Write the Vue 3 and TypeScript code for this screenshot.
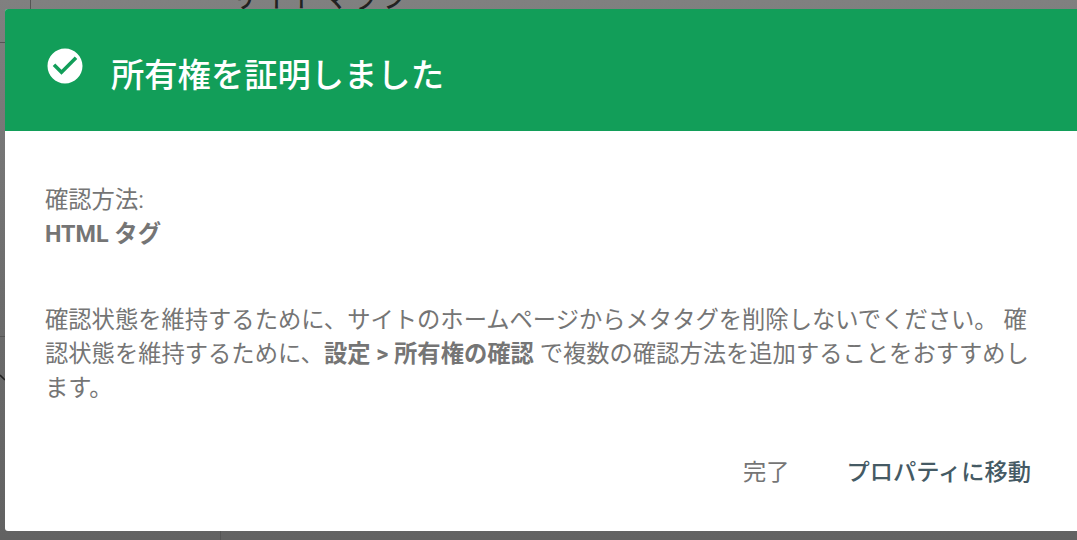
<script setup lang="ts">
const title = '所有権を証明しました'
</script>

<template>
  <div class="page">
    <div class="backdrop">
      <span class="bg-title">サイトマップ</span>
      <i class="rule v-top"></i>
      <i class="rule h-top"></i>
      <i class="rule h-mid"></i>
      <i class="rule v-bottom"></i>
      <svg class="chev" viewBox="0 0 6 10" width="6" height="10" aria-hidden="true">
        <path d="M0 1l5 5" stroke="#222" stroke-width="1.6" fill="none" />
      </svg>
    </div>
    <section class="dialog">
      <header class="head">
        <svg class="check" viewBox="0 0 24 24" width="42" height="42" aria-hidden="true">
          <path fill="#fff" d="M12 2C6.48 2 2 6.48 2 12s4.48 10 10 10 10-4.48 10-10S17.52 2 12 2zm-2 15-5-5 1.41-1.41L10 14.17l7.59-7.59L19 8l-9 9z" />
        </svg>
        <h1>{{ title }}</h1>
      </header>
      <div class="body">
        <p class="method">確認方法:<br /><b>HTML タグ</b></p>
        <p class="note">確認状態を維持するために、サイトのホームページからメタタグを削除しないでください。 確認状態を維持するために、<b>設定 &gt; 所有権の確認</b> で複数の確認方法を追加することをおすすめします。</p>
      </div>
      <footer class="actions">
        <button class="btn done">完了</button>
        <button class="btn go">プロパティに移動</button>
      </footer>
    </section>
  </div>
</template>

<style>
html, body { margin: 0; background: #666; overflow: hidden; }
</style>

<style scoped>
.page {
  position: relative;
  width: 1077px;
  height: 540px;
  overflow: hidden;
  font-family: Roboto, "Noto Sans CJK JP", sans-serif;
}
.backdrop {
  position: absolute;
  inset: 0;
  background: linear-gradient(#808080 0, #6c6c6c 300px, #626262 540px);
}
.bg-title {
  position: absolute;
  left: 230px;
  top: -26px;
  font-size: 30px;
  line-height: 46px;
  color: #222;
}
.rule { position: absolute; background: #555; }
.v-top { left: 30px; top: 0; width: 1px; height: 9px; }
.h-top { left: 0; top: 42px; width: 5px; height: 1px; }
.h-mid { left: 0; top: 336px; width: 5px; height: 1px; }
.v-bottom { left: 220px; top: 531px; width: 1px; height: 9px; }
.chev { position: absolute; left: 0; top: 374px; }
.dialog {
  position: absolute;
  left: 5px;
  top: 9px;
  width: 1100px;
  height: 522px;
  background: #fff;
  border-radius: 3px;
  display: flex;
  flex-direction: column;
}
.head {
  height: 122px;
  background: #129e59;
  border-radius: 3px 3px 0 0;
  display: flex;
  align-items: center;
  padding-left: 39px;
  box-sizing: border-box;
  color: #fff;
}
.check { margin-top: -8px; }
h1 {
  margin: 4px 0 0 25px;
  font-size: 33.3px;
  font-weight: 500;
}
.body {
  width: 986px;
  padding: 52px 0 0 40px;
  color: #757575;
  font-size: 23.3px;
  line-height: 34px;
}
.body p { margin: 0; }
.body b { font-weight: 700; }
.note { margin-top: 52px !important; }
.actions {
  position: absolute;
  top: 440px;
  left: 738px;
  display: flex;
  gap: 57px;
}
.btn {
  border: 0;
  background: none;
  padding: 0;
  font: inherit;
  font-size: 23.25px;
  line-height: 46px;
}
.done { color: #757575; }
.go { color: #455a64; font-weight: 500; }
</style>
